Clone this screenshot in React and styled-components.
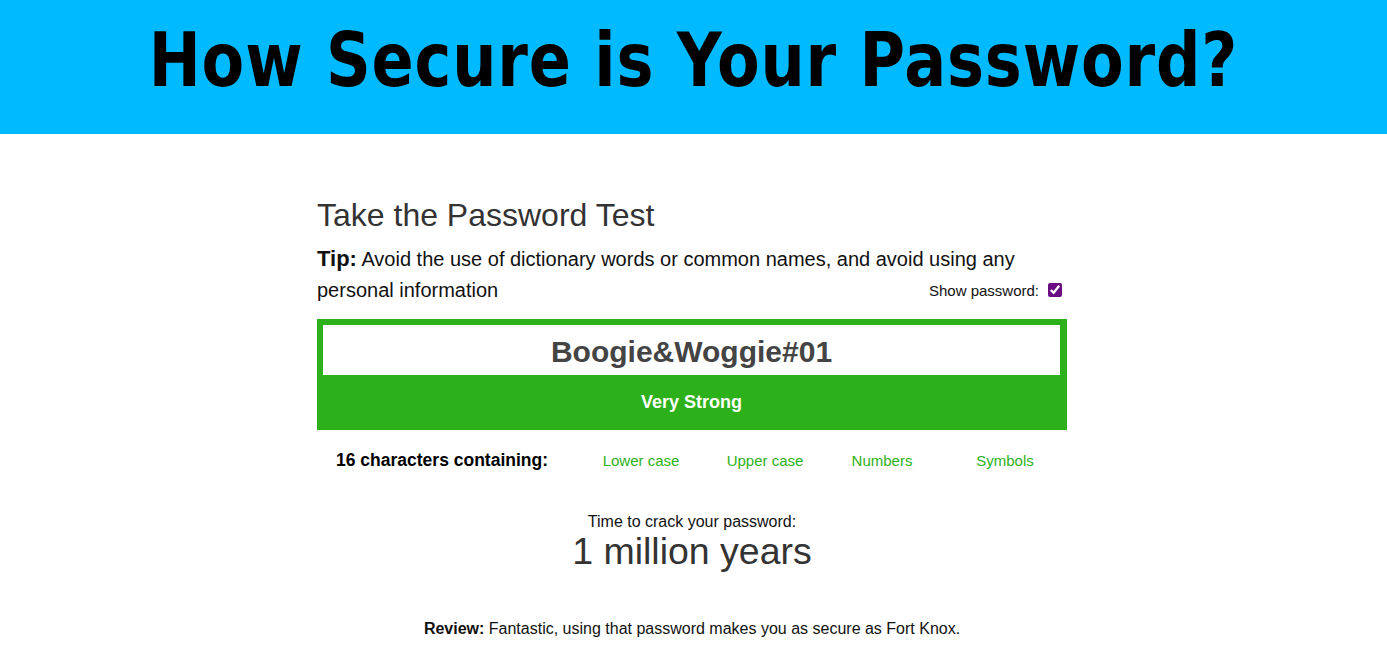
import React from 'react';
import styled, { createGlobalStyle } from 'styled-components';

const GlobalStyle = createGlobalStyle`
  body {
    margin: 0;
    font-family: "Liberation Sans", Arial, sans-serif;
    background: #fff;
    color: #333;
  }
`;

const Banner = styled.header`
  background: #00baff;
  height: 134px;
  display: flex;
  align-items: center;
  justify-content: center;
  padding-bottom: 14px;
  box-sizing: border-box;
`;

const BannerTitle = styled.h1`
  margin: 0;
  font-family: "DejaVu Sans", sans-serif;
  font-weight: bold;
  font-size: 74px;
  letter-spacing: 1px;
  color: #000;
  transform: scaleX(0.84);
  white-space: nowrap;
`;

const Main = styled.main`
  width: 750px;
  margin: 0 auto;
  padding: 62px 3px 0 0;
`;

const Heading = styled.h2`
  margin: 0;
  font-weight: normal;
  font-size: 32px;
  color: #333;
  line-height: 38px;
`;

const TipRow = styled.div`
  position: relative;
  margin-top: 9px;
  font-size: 20px;
  line-height: 31px;
  color: #111;
`;

const TipLabel = styled.strong`
  font-size: 22px;
`;

const ShowToggle = styled.label`
  position: absolute;
  right: 5px;
  bottom: 7px;
  display: flex;
  align-items: center;
  gap: 9px;
  font-size: 15px;
  line-height: 16px;
`;

const Check = styled.input`
  margin: 0 0 2px;
  width: 14px;
  height: 14px;
  accent-color: #6a0d83;
`;

const Meter = styled.div`
  margin-top: 13px;
  background: #2db11a;
  padding: 6px 7px 0 6px;
  height: 111px;
  box-sizing: border-box;
`;

const PasswordField = styled.input`
  display: block;
  width: 100%;
  height: 50px;
  padding: 3px 0 0;
  box-sizing: border-box;
  border: none;
  outline: none;
  text-align: center;
  font-family: "Liberation Sans", Arial, sans-serif;
  font-weight: bold;
  font-size: 30px;
  color: #444;
  background: #fff;
`;

const Strength = styled.div`
  text-align: center;
  color: #fff;
  font-weight: bold;
  font-size: 18px;
  line-height: 54px;
`;

const Criteria = styled.div`
  display: grid;
  grid-template-columns: 262px 124px 124px 110px 136px;
  align-items: baseline;
  margin-top: 19px;
`;

const Count = styled.span`
  font-weight: bold;
  font-size: 17.5px;
  color: #000;
  padding-left: 19px;
`;

const Criterion = styled.span`
  font-size: 15px;
  color: #2db11a;
  text-align: center;
  padding-top: 3px;
`;

const Crack = styled.div`
  text-align: center;
  margin-top: 42px;
`;

const CrackLabel = styled.div`
  font-size: 16px;
  color: #111;
  line-height: 17px;
`;

const CrackTime = styled.div`
  font-size: 37.5px;
  line-height: 42px;
  color: #333;
`;

const Review = styled.p`
  text-align: center;
  font-size: 16px;
  color: #111;
  margin: 48px 0 0;
`;

export default function App() {
  return (
    <>
      <GlobalStyle />
      <Banner>
        <BannerTitle>How Secure is Your Password?</BannerTitle>
      </Banner>
      <Main>
        <Heading>Take the Password Test</Heading>
        <TipRow>
          <TipLabel>Tip:</TipLabel> Avoid the use of dictionary words or common names, and avoid using any
          <br />
          personal information
          <ShowToggle>
            Show password:
            <Check type="checkbox" defaultChecked />
          </ShowToggle>
        </TipRow>
        <Meter>
          <PasswordField type="text" defaultValue="Boogie&Woggie#01" />
          <Strength>Very Strong</Strength>
        </Meter>
        <Criteria>
          <Count>16 characters containing:</Count>
          <Criterion>Lower case</Criterion>
          <Criterion>Upper case</Criterion>
          <Criterion>Numbers</Criterion>
          <Criterion>Symbols</Criterion>
        </Criteria>
        <Crack>
          <CrackLabel>Time to crack your password:</CrackLabel>
          <CrackTime>1 million years</CrackTime>
        </Crack>
        <Review>
          <strong>Review:</strong> Fantastic, using that password makes you as secure as Fort Knox.
        </Review>
      </Main>
    </>
  );
}
